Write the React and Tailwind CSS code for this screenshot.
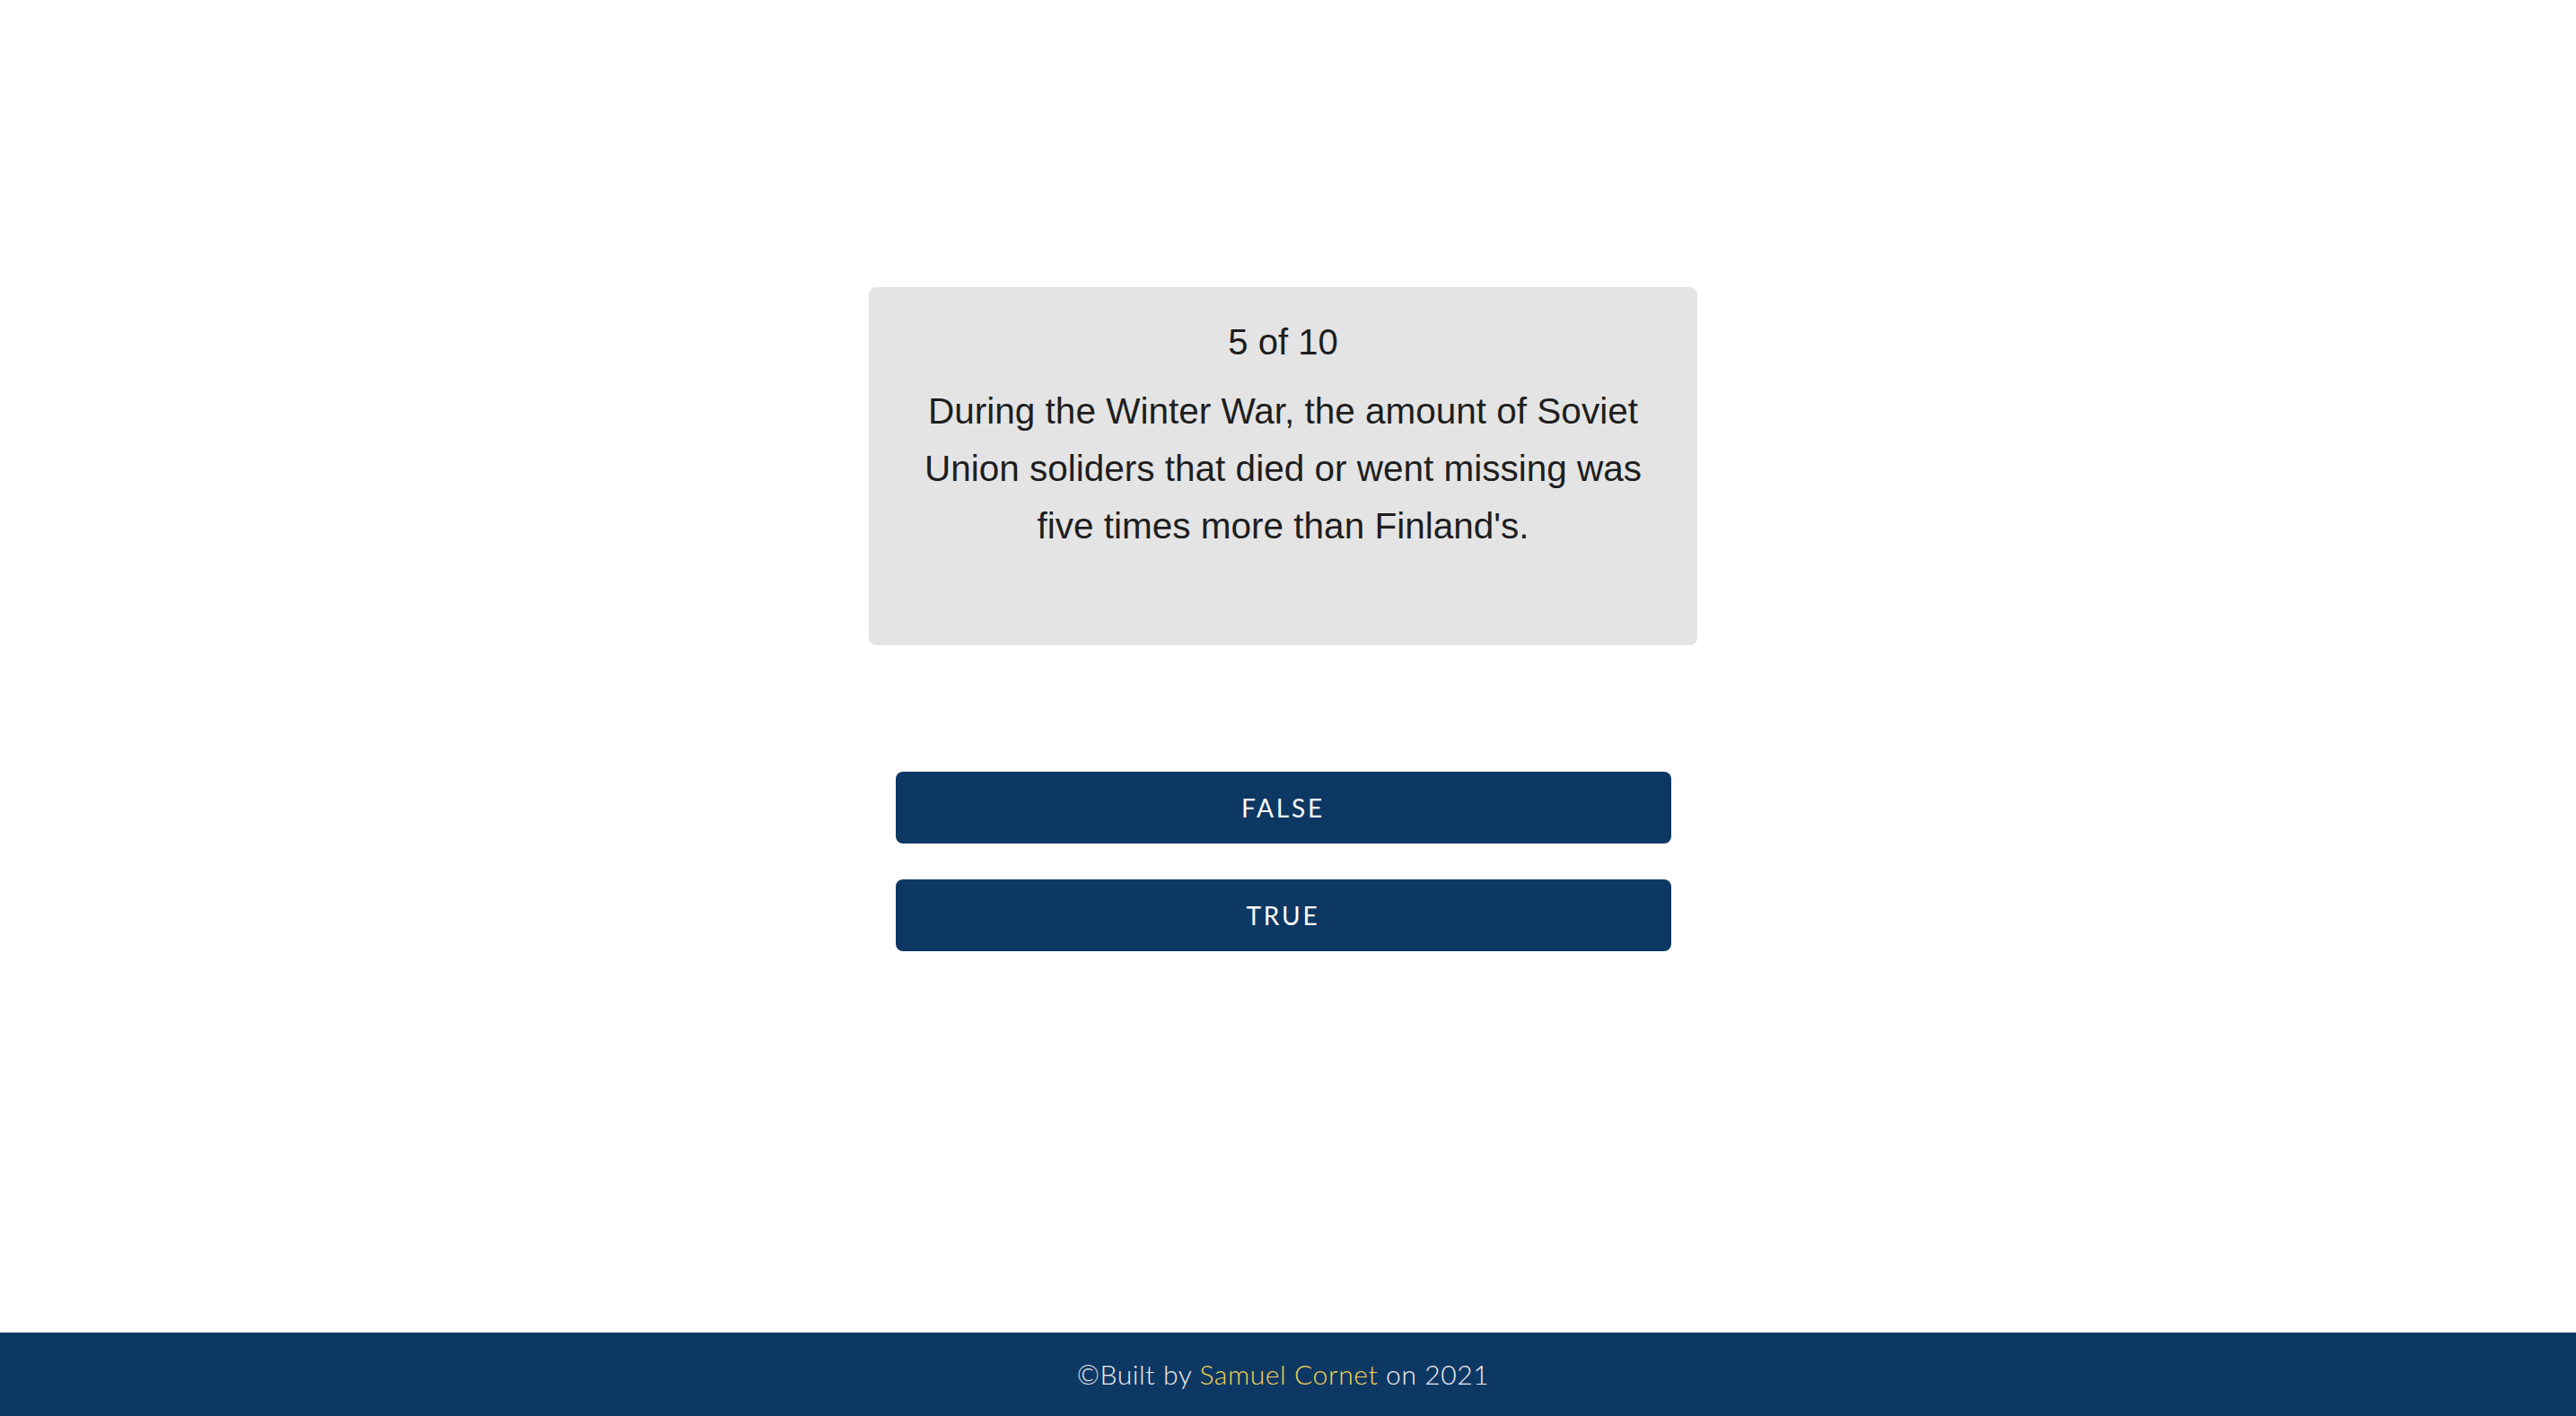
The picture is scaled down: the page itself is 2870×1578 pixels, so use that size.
export default function App() {
  const question = "During the Winter War, the amount of Soviet Union soliders that died or went missing was five times more than Finland's.";
  return (
    <div className="flex min-h-screen flex-col bg-white">
      <main className="flex flex-1 flex-col items-center pt-[320px] pr-[11px]">
        <div className="w-[923px] rounded-[8px] bg-[#e4e4e4] px-[58px] pt-[29px] pb-[101px] text-center text-[#1e1e1e] font-['Liberation_Sans',Arial,sans-serif]">
          <p className="text-[40px] leading-[64px]">5 of 10</p>
          <p className="mt-[13px] text-[40.5px] leading-[64px]">{question}</p>
        </div>

        <div className="mt-[141px] flex w-[864px] flex-col gap-[40px]">
          {["FALSE", "TRUE"].map((a) => (
            <button key={a} className="h-[80px] w-full rounded-[8px] bg-[#0e3864] text-[28px] tracking-[0.1em] text-white font-['Lato',sans-serif]">
              {a}
            </button>
          ))}
        </div>
      </main>

      <footer className="flex h-[93px] items-center justify-center bg-[#0e3864] pr-[11px] text-[30px] font-light tracking-[0.02em] text-[#eeeeee] font-['Lato',sans-serif]">
        <span>
          ©Built by <span className="text-[#f7d454]">Samuel Cornet</span> on 2021
        </span>
      </footer>
    </div>
  );
}
